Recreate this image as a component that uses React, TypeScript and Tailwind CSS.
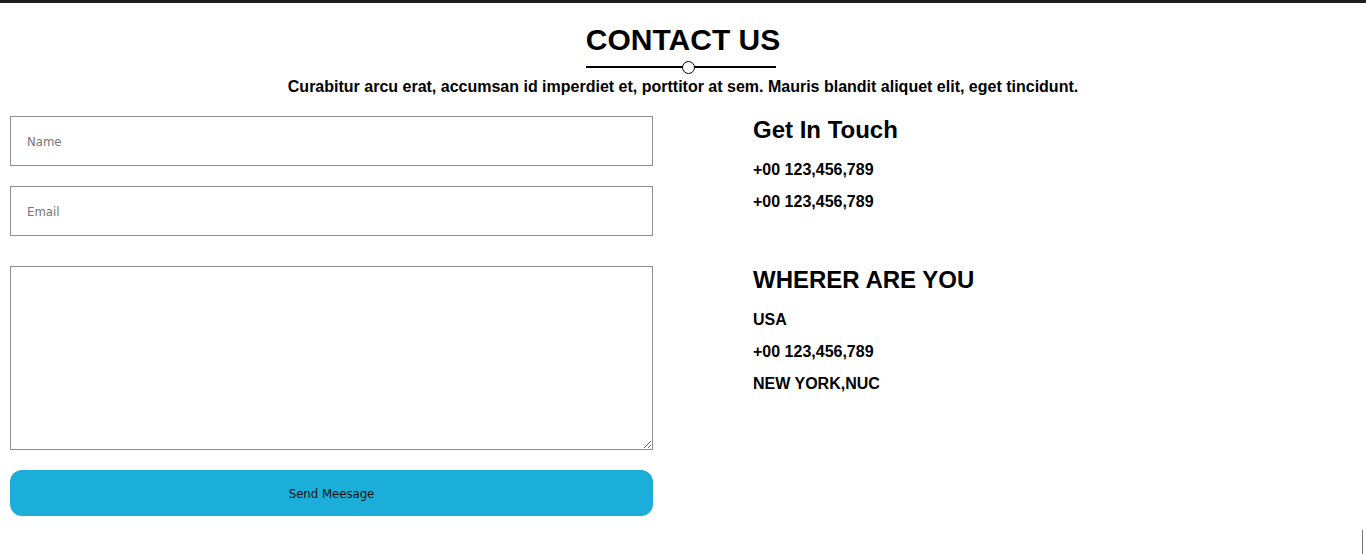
export default function App() {
  return (
    <div className="relative min-h-[554px] bg-white border-t-[3px] border-[#1e1e1e] font-['Liberation_Sans',Arial,sans-serif] text-black">
      <div className="flex flex-col items-center pt-[20px]">
        <h1 className="text-[30px] font-bold leading-[34px]">CONTACT US</h1>
        <div className="relative mr-[4px] mt-[9px] flex w-[190px] items-center">
          <div className="h-[2px] w-full bg-black"></div>
          <div className="absolute left-[96px] top-[-5.5px] h-[13px] w-[13px] rounded-full border-[1.5px] border-black bg-white"></div>
        </div>
        <p className="mt-[10px] text-[16px] font-bold leading-[18px]">
          Curabitur arcu erat, accumsan id imperdiet et, porttitor at sem. Mauris blandit aliquet elit, eget tincidunt.
        </p>
      </div>

      <div className="mt-[20px] flex">
        <form className="ml-[10px] flex w-[643px] flex-col font-['DejaVu_Sans_Condensed','DejaVu_Sans',sans-serif]">
          <input
            type="text"
            placeholder="Name"
            className="h-[50px] w-full border border-[#8f8c98] px-[16px] text-[13px] text-black outline-none placeholder:text-[#757575]"
          />
          <input
            type="email"
            placeholder="Email"
            className="mt-[20px] h-[50px] w-full border border-[#8f8c98] px-[16px] text-[13px] text-black outline-none placeholder:text-[#757575]"
          />
          <textarea className="mt-[30px] h-[184px] w-full border border-[#8f8c98] px-[16px] py-[10px] text-[13px] outline-none"></textarea>
          <button
            type="button"
            className="mt-[20px] h-[46px] w-full rounded-[12px] bg-[#1aaed8] pt-[2px] text-[13px] text-[#111]"
          >
            Send Meesage
          </button>
        </form>

        <div className="ml-[100px] flex flex-col">
          <h2 className="text-[24px] font-bold leading-[28px]">Get In Touch</h2>
          <p className="mt-[17px] text-[16px] font-bold leading-[18px]">+00 123,456,789</p>
          <p className="mt-[14px] text-[16px] font-bold leading-[18px]">+00 123,456,789</p>

          <h2 className="mt-[55px] text-[24px] font-bold leading-[28px]">WHERER ARE YOU</h2>
          <p className="mt-[17px] text-[16px] font-bold leading-[18px]">USA</p>
          <p className="mt-[14px] text-[16px] font-bold leading-[18px]">+00 123,456,789</p>
          <p className="mt-[14px] text-[16px] font-bold leading-[18px]">NEW YORK,NUC</p>
        </div>
      </div>

      <div className="absolute bottom-0 right-[3px] h-[24px] w-px bg-[#777]"></div>
    </div>
  );
}
